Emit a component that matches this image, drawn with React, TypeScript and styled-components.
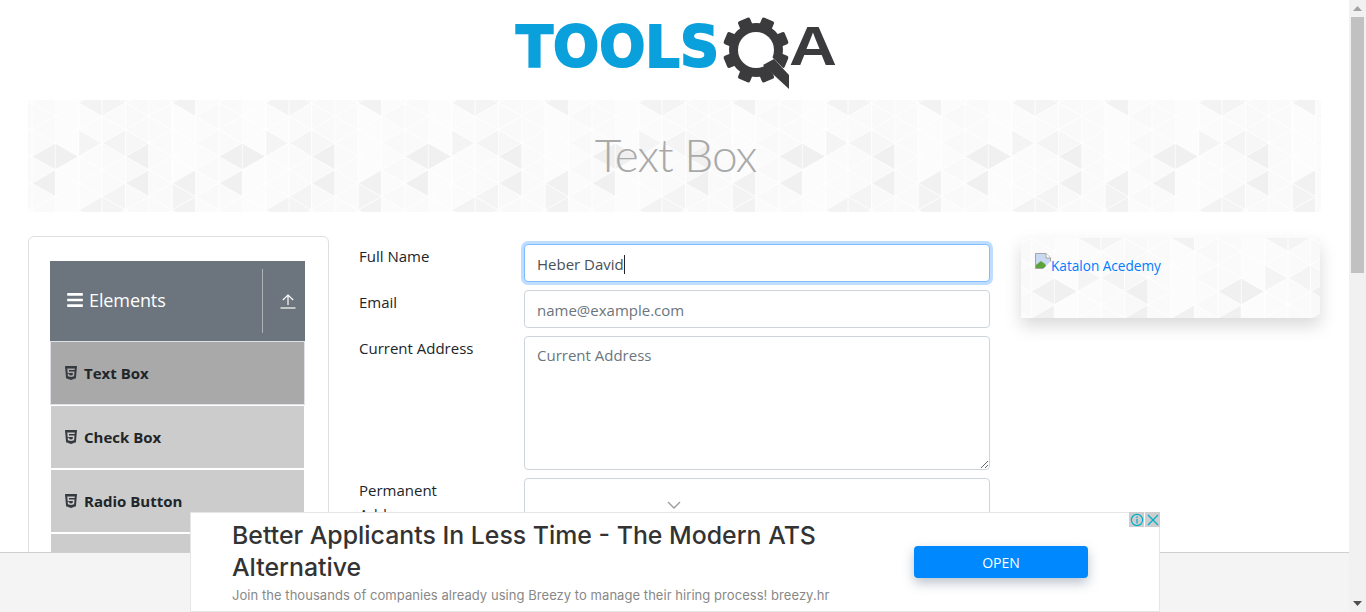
import React from 'react';
import styled, { createGlobalStyle } from 'styled-components';
import { FaBars, FaHtml5 } from 'react-icons/fa';

const UI_FONT = '"Open Sans", "Liberation Sans", sans-serif';
const AD_FONT = 'Inter, "Liberation Sans", sans-serif';

// triangle tile, 8 columns by 4 rows, units are 3x real pixels
const DARK: Record<string, string> = {
  'L1,1': '#f0f0f0',
  'R1,1': '#f0f0f0',
  'L1,2': '#f0f0f0',
  'R2,1': '#f4f4f4',
  'L4,1': '#f4f4f4',
  'R4,1': '#f7f7f7',
  'L5,1': '#f0f0f0',
  'L5,2': '#f0f0f0',
  'L7,2': '#f1f1f1',
  'R6,3': '#f3f3f3',
  'L4,3': '#f4f4f4',
  'L3,3': '#f3f3f3',
  'R3,3': '#f4f4f4',
  'L7,3': '#f2f2f2',
};
const LIGHT = ['#fafafa', '#fbfbfb', '#f9f9f9', '#fcfcfc', '#fafafa'];

const buildTile = () => {
  const polys: string[] = [];
  for (let j = -1; j <= 9; j++) {
    for (let k = -2; k <= 5; k++) {
      const col = ((j % 8) + 8) % 8;
      const row = ((k % 4) + 4) % 4;
      const y = (j % 2 !== 0 ? 40 : 0) + 80 * k;
      (['L', 'R'] as const).forEach(side => {
        const key = `${side}${col},${row}`;
        const fill = DARK[key] || LIGHT[(col * 3 + row * 5 + (side === 'L' ? 2 : 0)) % LIGHT.length];
        const tipX = 70 * j + (side === 'L' ? -70 : 70);
        polys.push(
          `<polygon points="${70 * j},${y} ${70 * j},${y + 80} ${tipX},${y + 40}" fill="${fill}" stroke="#fff" stroke-width="2" stroke-opacity="0.9"/>`,
        );
      });
    }
  }
  const svg = `<svg xmlns="http://www.w3.org/2000/svg" width="186.67" height="106.67" viewBox="0 0 560 320">${polys.join('')}</svg>`;
  return `url("data:image/svg+xml,${encodeURIComponent(svg)}")`;
};
const TILE = buildTile();

const GlobalStyle = createGlobalStyle`
  html, body {
    margin: 0;
    padding: 0;
    height: 612px;
    overflow: hidden;
    background: #fff;
    font-family: ${UI_FONT};
    color: #212529;
  }
  * {
    box-sizing: border-box;
  }
`;

const Shell = styled.div`
  display: flex;
  width: 1366px;
  height: 612px;
  position: relative;
  overflow: hidden;
`;

const Page = styled.main`
  flex: 1;
  min-width: 0;
  height: 612px;
  overflow: hidden;
`;

const Header = styled.header`
  height: 100px;
  display: flex;
  justify-content: center;
  align-items: flex-start;
  padding-left: 7px;
  padding-top: 15px;
`;

const Banner = styled.div`
  height: 112px;
  margin: 0 28px;
  background-image: ${TILE};
  background-position: 4px 3px;
  display: flex;
  justify-content: center;
  align-items: center;
`;

const BannerTitle = styled.h1`
  margin: 0;
  font-family: Lato, ${UI_FONT};
  font-size: 46px;
  font-weight: 300;
  letter-spacing: -1px;
  line-height: 1.2;
  color: #a9a9a9;
  padding-left: 2px;
  position: relative;
  top: -1px;
`;

const Content = styled.div`
  display: flex;
  align-items: flex-start;
  padding: 24px 28px 0;
`;

const SidePanel = styled.aside`
  width: 301px;
  flex: none;
  height: 420px;
  padding: 24px 23px 24px 21px;
  border: 1px solid #dfdfdf;
  border-radius: 6px;
`;

const GroupHeader = styled.div`
  height: 80px;
  background: #6c757d;
  color: #fff;
  display: flex;
  align-items: center;
`;

const GroupTitle = styled.div`
  flex: 1;
  display: flex;
  align-items: center;
  gap: 5px;
  padding: 0 0 0 16px;
  font-size: 18px;
  font-weight: 400;
  letter-spacing: -0.1px;
  position: relative;
  top: -1px;
`;

const GroupToggle = styled.div`
  width: 43px;
  height: 64px;
  border-left: 1px solid #adb2b7;
  padding-left: 8px;
  display: flex;
  align-items: center;
  justify-content: center;
`;

const MenuItem = styled.div<{ $active?: boolean }>`
  height: 64px;
  display: flex;
  align-items: center;
  gap: 5px;
  padding-left: 12px;
  font-size: 15px;
  font-weight: 700;
  color: #212529;
  background: ${props => (props.$active ? '#a9a9a9' : '#cccccc')};
  border: 1px solid #fff;
  outline: ${props => (props.$active ? '1px solid #dee2e6' : 'none')};
  outline-offset: -1px;

  svg {
    color: #343a40;
    font-size: 16px;
  }
`;

const FormColumn = styled.form`
  width: 631px;
  flex: none;
  margin-left: 30px;
  padding-top: 8px;
`;

const FormRow = styled.div`
  display: flex;
  margin-bottom: 8px;
`;

const FieldLabel = styled.label`
  width: 165px;
  flex: none;
  padding-right: 30px;
  font-size: 15px;
  line-height: 24px;
  color: #212529;
`;

const fieldCss = `
  width: 466px;
  display: block;
  padding: 6px 12px;
  font-family: ${UI_FONT};
  font-size: 15px;
  line-height: 24px;
  color: #495057;
  background: #fff;
  border: 1px solid #ced4da;
  border-radius: 4px;
  outline: none;
  &::placeholder {
    color: #6c757d;
    opacity: 1;
  }
`;

const FocusedField = styled.div`
  ${fieldCss}
  height: 38px;
  padding-top: 7px;
  border-color: #80bdff;
  box-shadow: 0 0 0 3px rgba(0, 123, 255, 0.25);
`;

const Caret = styled.span`
  display: inline-block;
  width: 1px;
  height: 19px;
  background: #212529;
  vertical-align: -4px;
`;

const TextField = styled.input`
  ${fieldCss}
  height: 38px;
  padding-top: 7px;
  padding-bottom: 5px;
`;

const TextArea = styled.textarea`
  ${fieldCss}
  height: 134px;
  resize: vertical;
`;

const SelectBox = styled.div`
  ${fieldCss}
  height: 80px;
  display: flex;
  padding: 22px 0 0 142px;
`;

const AdPanel = styled.div`
  width: 299px;
  height: 80px;
  flex: none;
  margin: 2px 0 0 31px;
  padding: 15px 14px;
  background-image: ${TILE};
  background-position: 10px 0;
  box-shadow: 0 8px 16px rgba(0, 0, 0, 0.15);
  font-size: 13.6px;
  line-height: 20px;
`;

const AdLink = styled.a`
  color: #007bff;
  text-decoration: none;
  display: inline-flex;
  align-items: flex-start;
`;

const AdLinkText = styled.span`
  padding-top: 3px;
`;

const Footer = styled.footer`
  position: absolute;
  left: 0;
  bottom: 0;
  width: 1349px;
  height: 60px;
  background: #f4f4f4;
  border-top: 1px solid #cfcfcf;
`;

const AdBar = styled.div`
  position: absolute;
  left: 190px;
  bottom: 0;
  width: 970px;
  height: 100px;
  background: #fff;
  border: 1px solid #e6e6e6;
  display: flex;
  align-items: flex-start;
  font-family: ${AD_FONT};
`;

const AdCopy = styled.div`
  width: 640px;
  flex: none;
  margin-left: 41px;
  padding-top: 6px;
`;

const AdTitle = styled.div`
  font-size: 24.85px;
  line-height: 32px;
  font-weight: 500;
  color: #333;
`;

const AdSub = styled.div`
  font-size: 13px;
  line-height: 24px;
  letter-spacing: 0.05px;
  color: #888;
  white-space: nowrap;
`;

const OpenButton = styled.div`
  width: 174px;
  height: 32px;
  flex: none;
  margin: 33px 0 0 42px;
  background: #0088ff;
  color: #fff;
  border-radius: 4px;
  font-family: ${UI_FONT};
  font-size: 14px;
  display: flex;
  align-items: center;
  justify-content: center;
  box-shadow: 0 5px 12px rgba(60, 80, 110, 0.35);
`;

const AdControls = styled.div`
  position: absolute;
  top: -1px;
  right: -1px;
  display: flex;
  gap: 1px;
`;

const AdControl = styled.div`
  width: 15px;
  height: 15px;
  background: #cdcdcd;
  display: flex;
  align-items: center;
  justify-content: center;
`;

const Scrollbar = styled.div`
  width: 17px;
  height: 612px;
  flex: none;
  background: #f1f1f1;
  display: flex;
  flex-direction: column;
  align-items: center;
`;

const ScrollArrow = styled.div`
  height: 17px;
  display: flex;
  align-items: center;
  justify-content: center;
  flex: none;
`;

const ScrollThumb = styled.div`
  width: 13px;
  height: 256px;
  background: #c1c1c1;
  flex: none;
`;

const ScrollTrack = styled.div`
  flex: 1;
`;

const Logo = () => (
  <svg width="326" height="80" viewBox="0 0 326 80">
    <text
      x="1"
      y="52"
      fontFamily='"DejaVu Sans", sans-serif'
      fontWeight="700"
      fontSize="57"
      fill="#0aa0dc"
      stroke="#0aa0dc"
      strokeWidth="2"
      textLength="203"
      lengthAdjust="spacingAndGlyphs"
    >
      TOOLS
    </text>
    <g transform="translate(241 35)" fill="#3b3b3d">
      {[0, 45, 90, 135, 180, 225, 270, 315].map(angle => (
        <rect key={angle} x="-6.5" y="-33" width="13" height="14" rx="2" transform={`rotate(${angle + 22.5})`} />
      ))}
      <circle r="27" />
      <circle r="18" fill="#fff" />
      <polygon points="6,13 14,5 38,29 38,45" fill="#fff" />
      <polygon points="18,9 33,25 33,39 7,15" fill="#3b3b3d" />
    </g>
    <text
      x="274"
      y="50"
      fontFamily='"Liberation Sans", sans-serif'
      fontWeight="700"
      fontSize="56"
      fill="#3b3b3d"
      textLength="48"
      lengthAdjust="spacingAndGlyphs"
    >
      A
    </text>
  </svg>
);

const UploadIcon = () => (
  <svg width="16" height="16" viewBox="0 0 16 16" fill="none" stroke="#fff" strokeWidth="1.2">
    <path d="M0.5 15H15.5" />
    <path d="M8 12V2M2.8 7L8 2L13.2 7" />
  </svg>
);

const BrokenImage = () => (
  <svg width="16" height="16" viewBox="0 0 16 16">
    <path d="M0.5 0.5H11L15.5 5V15.5H0.5Z" fill="#c9d9f2" stroke="#a5a5a5" />
    <path d="M11 0.5V5H15.5" fill="#fff" stroke="#a5a5a5" />
    <path d="M1 14.5V12L6 8L10 11L12 15H1Z" fill="#5ea23a" />
    <path d="M8 16L16 8V16Z" fill="#fff" />
  </svg>
);

const Chevron = () => (
  <svg width="14" height="8" viewBox="0 0 14 8" fill="none" stroke="#999" strokeWidth="1.3">
    <path d="M1 1L7 7L13 1" />
  </svg>
);

const InfoIcon = () => (
  <svg width="14" height="14" viewBox="0 0 14 14" fill="none" stroke="#00aecd" strokeWidth="1.2">
    <circle cx="7" cy="7" r="5.6" />
    <path d="M7 6V10.5M7 3.5V5" />
  </svg>
);

const CloseIcon = () => (
  <svg width="12" height="12" viewBox="0 0 12 12" fill="none" stroke="#00aecd" strokeWidth="1.3">
    <path d="M1 1L11 11M11 1L1 11" />
  </svg>
);

const menuItems = ['Text Box', 'Check Box', 'Radio Button', 'Web Tables'];

const App: React.FC = () => (
  <Shell>
    <GlobalStyle />
    <Page>
      <Header>
        <Logo />
      </Header>
      <Banner>
        <BannerTitle>Text Box</BannerTitle>
      </Banner>
      <Content>
        <SidePanel>
          <GroupHeader>
            <GroupTitle>
              <FaBars size={18} />
              Elements
            </GroupTitle>
            <GroupToggle>
              <UploadIcon />
            </GroupToggle>
          </GroupHeader>
          {menuItems.map((item, index) => (
            <MenuItem key={item} $active={index === 0}>
              <FaHtml5 />
              {item}
            </MenuItem>
          ))}
        </SidePanel>
        <FormColumn>
          <FormRow>
            <FieldLabel>Full Name</FieldLabel>
            <FocusedField>
              Heber David
              <Caret />
            </FocusedField>
          </FormRow>
          <FormRow>
            <FieldLabel>Email</FieldLabel>
            <TextField placeholder="name@example.com" readOnly />
          </FormRow>
          <FormRow>
            <FieldLabel>Current Address</FieldLabel>
            <TextArea placeholder="Current Address" readOnly />
          </FormRow>
          <FormRow>
            <FieldLabel>Permanent Address</FieldLabel>
            <SelectBox>
              <Chevron />
            </SelectBox>
          </FormRow>
        </FormColumn>
        <AdPanel>
          <AdLink href="#">
            <BrokenImage />
            <AdLinkText>Katalon Acedemy</AdLinkText>
          </AdLink>
        </AdPanel>
      </Content>
    </Page>
    <Scrollbar>
      <ScrollArrow>
        <svg width="9" height="5" viewBox="0 0 9 5">
          <path d="M4.5 0L9 5H0Z" fill="#a3a3a3" />
        </svg>
      </ScrollArrow>
      <ScrollThumb />
      <ScrollTrack />
      <ScrollArrow>
        <svg width="9" height="5" viewBox="0 0 9 5">
          <path d="M0 0H9L4.5 5Z" fill="#505050" />
        </svg>
      </ScrollArrow>
    </Scrollbar>
    <Footer>
      <AdBar>
        <AdCopy>
          <AdTitle>Better Applicants In Less Time - The Modern ATS Alternative</AdTitle>
          <AdSub>Join the thousands of companies already using Breezy to manage their hiring process! breezy.hr</AdSub>
        </AdCopy>
        <OpenButton>OPEN</OpenButton>
        <AdControls>
          <AdControl>
            <InfoIcon />
          </AdControl>
          <AdControl>
            <CloseIcon />
          </AdControl>
        </AdControls>
      </AdBar>
    </Footer>
  </Shell>
);

export default App;
